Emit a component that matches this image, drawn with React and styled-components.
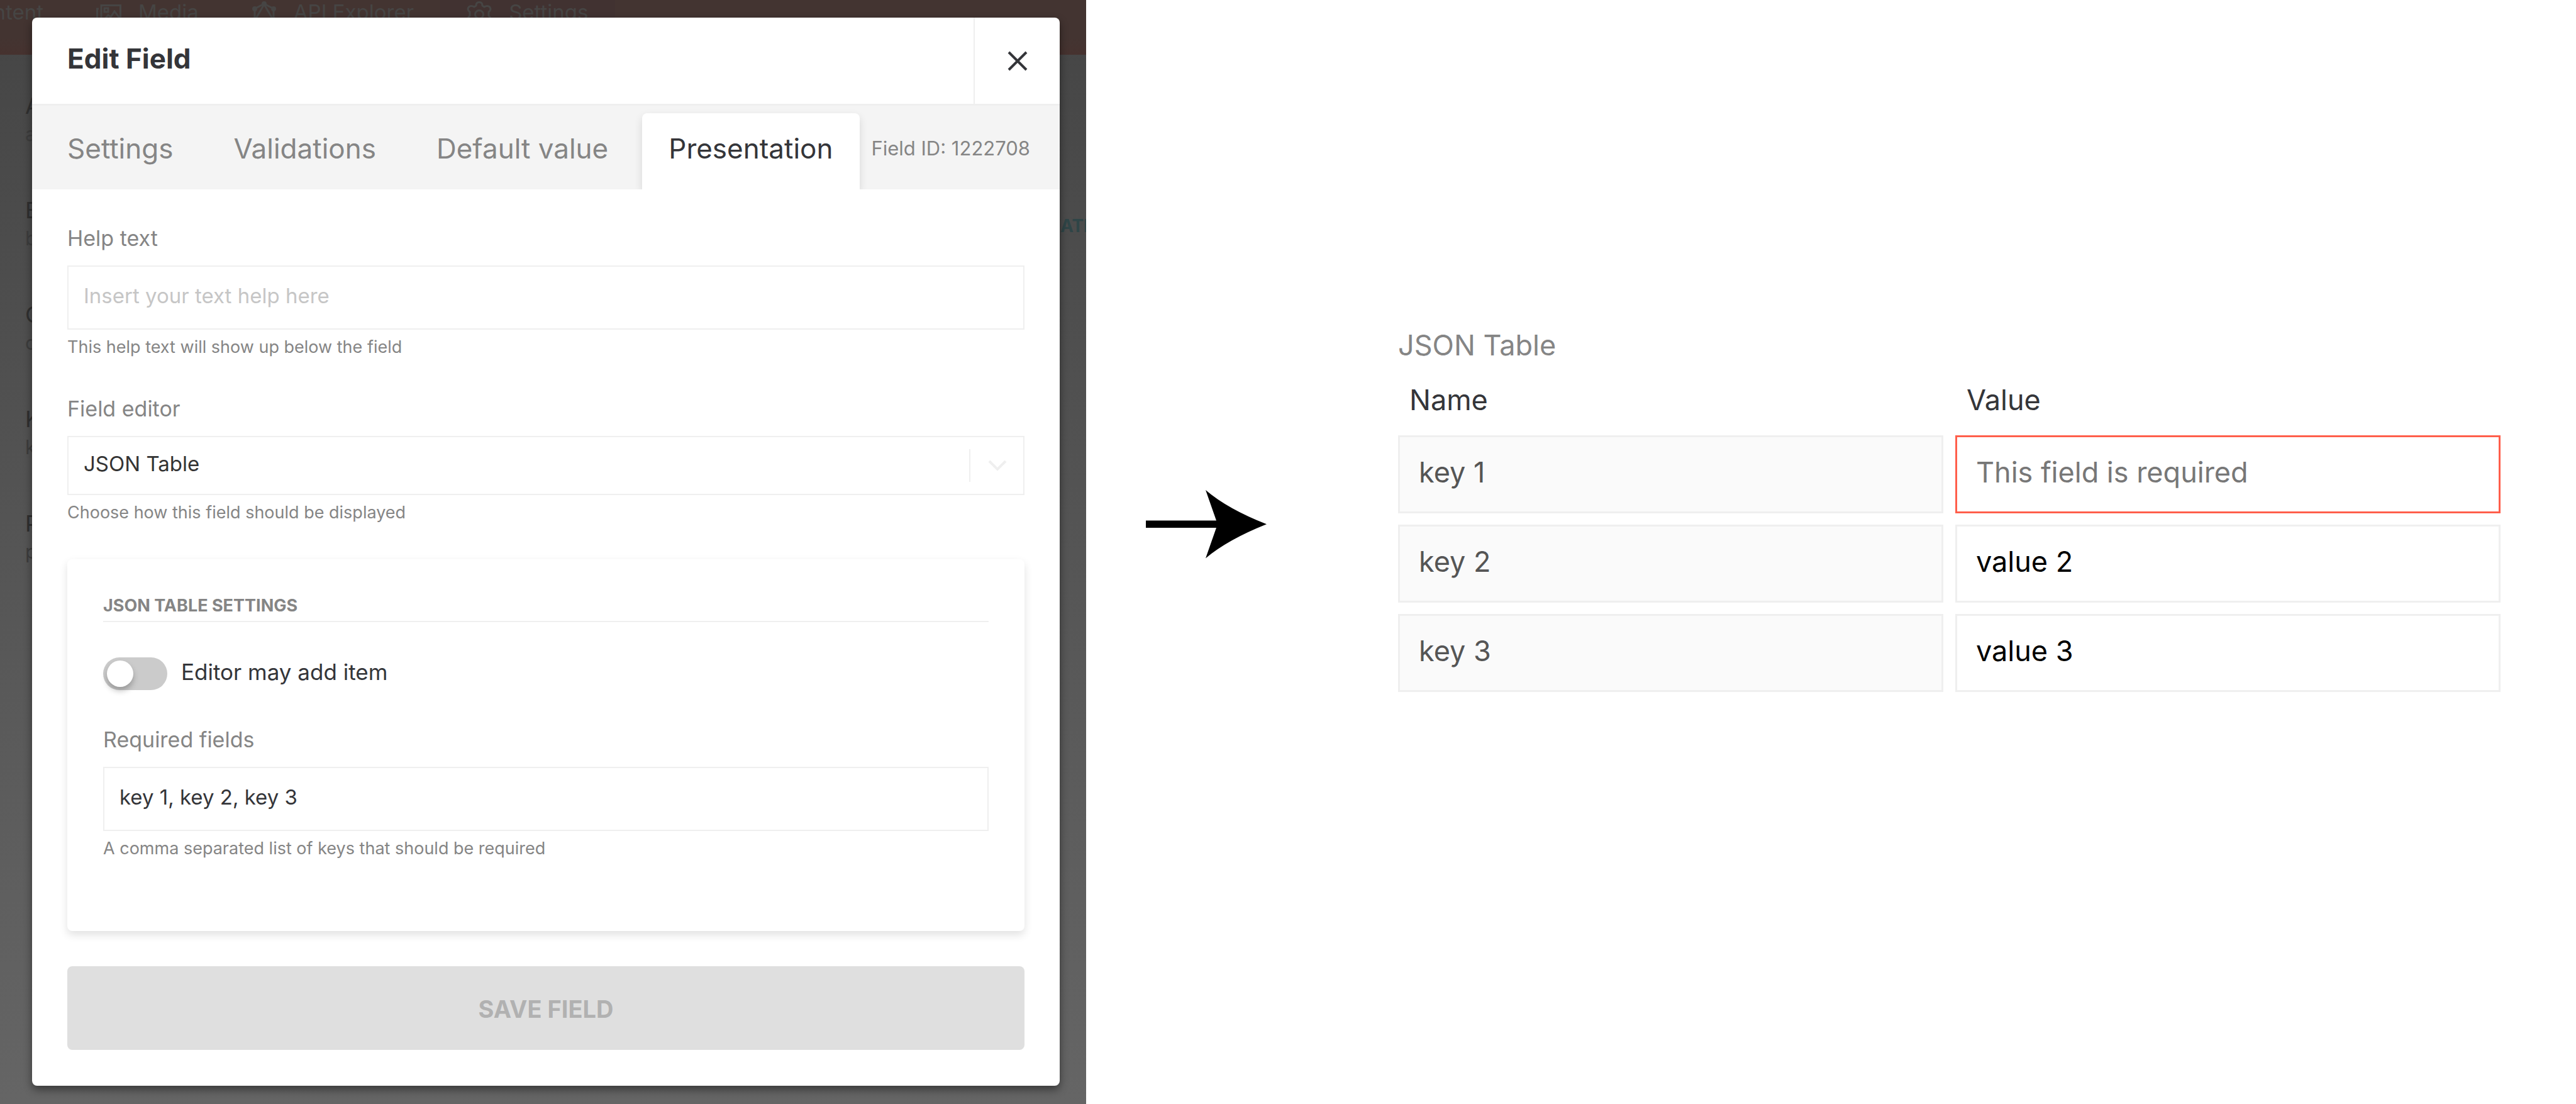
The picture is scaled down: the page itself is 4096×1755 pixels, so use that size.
import React, { useState } from "react";
import styled, { createGlobalStyle } from "styled-components";

const GlobalStyle = createGlobalStyle`
  *, *::before, *::after { box-sizing: border-box; }
  body {
    margin: 0;
    background: #fff;
    color: #343539;
    font-family: Inter, "Liberation Sans", sans-serif;
  }
  input, select, button { font-family: inherit; margin: 0; }
`;

const Page = styled.main`
  display: grid;
  grid-template-columns: 1727fr 496fr 1753fr 120fr;
  min-height: 100vh;
`;

/* ---------- Dimmed page behind the dialog ---------- */

const Stage = styled.section`
  display: grid;
  overflow: hidden;
  background: linear-gradient(#454545, #656565);
`;

const Backdrop = styled.div`
  grid-area: 1 / 1;
  min-width: 0;
  overflow: hidden;
`;

const TopNav = styled.nav`
  display: flex;
  height: 87px;
  background: linear-gradient(#433431 70%, #46322f);
`;

const NavItem = styled.div`
  display: flex;
  align-items: flex-start;
  gap: 27px;
  padding: 0 42px;
  font-size: 33px;
  line-height: 38px;
  white-space: nowrap;
  color: #464544;
  background: ${(p) => (p.$active ? "#413231" : "transparent")};
`;

const CutNavItem = styled(NavItem)`
  justify-content: flex-end;
  width: 111px;
  padding-left: 0;
`;

const NavIcon = styled.svg`
  flex: none;
  width: 40px;
  height: 44px;
  fill: none;
  stroke: #464544;
  stroke-width: 3;
`;

const RowList = styled.div`
  padding-top: 56px;
`;

const Row = styled.div`
  display: flex;
  justify-content: space-between;
  height: 166px;
  padding-left: 40px;
`;

const RowName = styled.div`
  font-size: 36px;
  line-height: 50px;
  color: #303030;
`;

const RowKey = styled.div`
  font-size: 31px;
  line-height: 40px;
  color: #3d3d3d;
`;

const RowBadge = styled.div`
  width: 41px;
  padding-top: 34px;
  font-size: 28px;
  font-weight: 700;
  line-height: 32px;
  color: #2f4547;
`;

/* ---------- Dialog ---------- */

const Overlay = styled.div`
  grid-area: 1 / 1;
  z-index: 1;
  padding: 28px 42px 29px 51px;
`;

const Dialog = styled.div`
  border-radius: 8px;
  background: #fff;
  box-shadow: 0 6px 14px rgba(0, 0, 0, 0.45);
`;

const DialogHeader = styled.header`
  display: flex;
  justify-content: space-between;
  height: 140px;
  border-bottom: 3px solid #efefef;
`;

const DialogTitle = styled.h1`
  align-self: center;
  margin: 0;
  padding: 0 0 7px 56px;
  font-size: 44px;
  font-weight: 700;
  line-height: 54px;
`;

const CloseButton = styled.button`
  display: grid;
  place-items: center;
  width: 137px;
  padding: 0;
  border: 0;
  border-left: 2px solid #efefef;
  background: none;
  color: #343539;
`;

const TabBar = styled.div`
  display: flex;
  align-items: flex-end;
  gap: 12px;
  height: 133px;
  padding: 0 47px 0 14px;
  overflow: hidden;
  background: #f4f4f4;
`;

const Tab = styled.button`
  flex: none;
  height: 121px;
  padding: 0 42px 9px;
  border: 0;
  border-radius: 8px 8px 0 0;
  font-size: 44px;
  line-height: 54px;
  white-space: nowrap;
  background: ${(p) => (p.$active ? "#fff" : "transparent")};
  color: ${(p) => (p.$active ? "#343539" : "#858585")};
  box-shadow: ${(p) => (p.$active ? "0 6px 14px rgba(0, 0, 0, 0.12)" : "none")};
`;

const FieldId = styled.div`
  height: 121px;
  margin-left: auto;
  padding-bottom: 9px;
  font-size: 31px;
  line-height: 112px;
  white-space: nowrap;
  color: #858585;
`;

const DialogBody = styled.form`
  padding: 58px 56px 57px;
`;

const FieldStack = styled.div`
  display: grid;
  gap: 62px;
`;

const Field = styled.div`
  display: flex;
  flex-direction: column;
`;

const Label = styled.label`
  margin-bottom: 23px;
  font-size: 34px;
  line-height: 40px;
  color: #858585;
`;

const Hint = styled.div`
  margin-top: 12px;
  font-size: 27px;
  line-height: 32px;
  color: #858585;
`;

const TextBox = styled.input`
  width: 100%;
  height: 102px;
  padding: 0 24px 6px;
  border: 2px solid #efefef;
  border-radius: 0;
  outline: 0;
  background: #fff;
  font-size: 33px;
  color: #343539;

  &::placeholder { color: #c6c6c6; opacity: 1; }
`;

const SelectFrame = styled.div`
  position: relative;
  height: 94px;
`;

const Select = styled.select`
  appearance: none;
  width: 100%;
  height: 100%;
  padding: 0 24px 6px;
  border: 2px solid #efefef;
  border-radius: 0;
  outline: 0;
  background: #fff;
  font-size: 33px;
  color: #333;
`;

const SelectArrow = styled.span`
  position: absolute;
  top: 21px;
  right: 0;
  bottom: 21px;
  display: grid;
  place-items: center;
  width: 88px;
  border-left: 2px solid #efefef;
  pointer-events: none;
`;

const SettingsCard = styled.section`
  margin-top: 58px;
  padding: 58px 57px 115px;
  border-radius: 8px;
  box-shadow: 0 6px 14px rgba(0, 0, 0, 0.12);
`;

const CardTitle = styled.h2`
  margin: 0;
  padding-bottom: 8px;
  border-bottom: 2px solid #efefef;
  font-size: 27px;
  font-weight: 700;
  line-height: 32px;
  color: #858585;
`;

const ToggleRow = styled.label`
  display: flex;
  gap: 22px;
  margin: 56px 0 59px;
  font-size: 35px;
  line-height: 46px;
`;

const Toggle = styled.input`
  appearance: none;
  display: flex;
  align-items: center;
  width: 102px;
  height: 52px;
  margin: 0;
  padding: 0 6px;
  border-radius: 26px;
  background: ${(p) => (p.checked ? "#7fc9a0" : "#cbcbcb")};

  &::before {
    content: "";
    width: 42px;
    height: 42px;
    margin-left: ${(p) => (p.checked ? "auto" : "0")};
    border-radius: 50%;
    background: #fff;
    box-shadow: 0 6px 10px rgba(0, 0, 0, 0.25);
  }
`;

const SaveButton = styled.button`
  width: 100%;
  height: 133px;
  margin-top: 56px;
  padding: 2px 0 0;
  border: 0;
  border-radius: 8px;
  background: #dfdfdf;
  font-size: 38px;
  font-weight: 700;
  color: #b1b1b1;
`;

/* ---------- Arrow and resulting table ---------- */

const ArrowColumn = styled.div`
  padding: 779px 0 0 95px;
`;

const TableColumn = styled.section`
  padding-top: 522px;
`;

const JsonTable = styled.table`
  display: block;
  font-size: 45px;

  caption, thead, tbody { display: block; }
  caption { line-height: 54px; text-align: left; color: #858585; }
  thead { margin: 33px 0 29px; }
  tbody { display: grid; gap: 18px; }
`;

const TableRow = styled.tr`
  display: grid;
  grid-template-columns: 1fr 1fr;
  gap: 19px;
`;

const HeadCell = styled.th`
  padding: 0 18px;
  font-weight: 400;
  line-height: 54px;
  text-align: left;
`;

const Cell = styled.td`
  padding: 0;
`;

const CellInput = styled.input`
  display: block;
  width: 100%;
  height: 124px;
  padding: 0 30px 8px;
  border: 3px solid ${(p) => (p.$invalid ? "#ff5e4b" : "#efefef")};
  border-radius: 0;
  outline: 0;
  background: ${(p) => (p.readOnly ? "#fafafa" : "#fff")};
  font-size: 45px;
  color: ${(p) => (p.readOnly ? "#555" : "#000")};

  &::placeholder { color: #777; opacity: 1; }
`;

const tabs = ["Settings", "Validations", "Default value", "Presentation"];

const backgroundRows = [
  { name: "A", key: "a" },
  { name: "B", key: "b", badge: "ATE" },
  { name: "C", key: "c" },
  { name: "K", key: "k" },
  { name: "P", key: "p" },
];

const entries = [
  { key: "key 1", value: "" },
  { key: "key 2", value: "value 2" },
  { key: "key 3", value: "value 3" },
];

function MediaIcon() {
  return (
    <NavIcon viewBox="0 0 40 44">
      <path d="M8 8.500H38.500V38H8ZM4 14H1.500V42H32" />
      <rect x="13" y="13" width="6" height="6" />
      <path d="M12 32L19 24L23 27L29 18L36 27V33" />
    </NavIcon>
  );
}

function ApiIcon() {
  return (
    <NavIcon viewBox="0 0 40 44">
      <path d="M20 6L35 14V31L20 39L5 31V14ZM20 7L6 31H34Z" />
      <g fill="#464544" stroke="none">
        <circle cx="20" cy="6" r="4" />
        <circle cx="35" cy="14" r="4" />
        <circle cx="35" cy="31" r="4" />
        <circle cx="20" cy="39" r="4" />
        <circle cx="5" cy="31" r="4" />
        <circle cx="5" cy="14" r="4" />
      </g>
    </NavIcon>
  );
}

function GearIcon() {
  return (
    <NavIcon viewBox="0 0 40 44">
      <path d="M15 9Q15 3.500 20 3.500Q25 3.500 25 9L28 11Q33 8 36.500 11Q40 15 35 19V25Q40 29 36.500 33Q33 36 28 33L25 35Q25 41 20 41Q15 41 15 35L12 33Q7 36 3.500 33Q0 29 5 25V19Q0 15 3.500 11Q7 8 12 11Z" />
      <circle cx="20" cy="23" r="6.500" />
    </NavIcon>
  );
}

function PageBehind() {
  return (
    <Backdrop aria-hidden="true">
      <TopNav>
        <CutNavItem>ntent</CutNavItem>
        <NavItem><MediaIcon />Media</NavItem>
        <NavItem><ApiIcon />API Explorer</NavItem>
        <NavItem $active><GearIcon />Settings</NavItem>
      </TopNav>
      <RowList>
        {backgroundRows.map((row) => (
          <Row key={row.name}>
            <div>
              <RowName>{row.name}</RowName>
              <RowKey>{row.key}</RowKey>
            </div>
            {row.badge && <RowBadge>{row.badge}</RowBadge>}
          </Row>
        ))}
      </RowList>
    </Backdrop>
  );
}

function EditFieldDialog() {
  const [activeTab, setActiveTab] = useState("Presentation");
  const [helpText, setHelpText] = useState("");
  const [mayAdd, setMayAdd] = useState(false);
  const [required, setRequired] = useState("key 1, key 2, key 3");

  return (
    <Dialog role="dialog" aria-labelledby="dialog-title">
      <DialogHeader>
        <DialogTitle id="dialog-title">Edit Field</DialogTitle>
        <CloseButton type="button" aria-label="Close">
          <svg width="32" height="32" viewBox="0 0 32 32" fill="none" stroke="currentColor" strokeWidth="4">
            <path d="M2 2L30 30M30 2L2 30" />
          </svg>
        </CloseButton>
      </DialogHeader>
      <TabBar role="tablist">
        {tabs.map((tab) => (
          <Tab
            key={tab}
            type="button"
            role="tab"
            aria-selected={tab === activeTab}
            $active={tab === activeTab}
            onClick={() => setActiveTab(tab)}
          >
            {tab}
          </Tab>
        ))}
        <FieldId>Field ID: 1222708</FieldId>
      </TabBar>
      <DialogBody onSubmit={(e) => e.preventDefault()}>
        <FieldStack>
          <Field>
            <Label htmlFor="help-text">Help text</Label>
            <TextBox
              id="help-text"
              placeholder="Insert your text help here"
              value={helpText}
              onChange={(e) => setHelpText(e.target.value)}
            />
            <Hint>This help text will show up below the field</Hint>
          </Field>
          <Field>
            <Label htmlFor="field-editor">Field editor</Label>
            <SelectFrame>
              <Select id="field-editor" defaultValue="json-table">
                <option value="json-table">JSON Table</option>
              </Select>
              <SelectArrow>
                <svg width="30" height="18" viewBox="0 0 30 18" fill="none" stroke="#efefef" strokeWidth="4">
                  <path d="M2 2L15 15L28 2" />
                </svg>
              </SelectArrow>
            </SelectFrame>
            <Hint>Choose how this field should be displayed</Hint>
          </Field>
        </FieldStack>
        <SettingsCard>
          <CardTitle>JSON TABLE SETTINGS</CardTitle>
          <ToggleRow>
            <Toggle type="checkbox" checked={mayAdd} onChange={(e) => setMayAdd(e.target.checked)} />
            Editor may add item
          </ToggleRow>
          <Field>
            <Label htmlFor="required-fields">Required fields</Label>
            <TextBox
              id="required-fields"
              value={required}
              onChange={(e) => setRequired(e.target.value)}
            />
            <Hint>A comma separated list of keys that should be required</Hint>
          </Field>
        </SettingsCard>
        <SaveButton type="submit" disabled>SAVE FIELD</SaveButton>
      </DialogBody>
    </Dialog>
  );
}

function ResultTable() {
  return (
    <JsonTable>
      <caption>JSON Table</caption>
      <thead>
        <TableRow>
          <HeadCell scope="col">Name</HeadCell>
          <HeadCell scope="col">Value</HeadCell>
        </TableRow>
      </thead>
      <tbody>
        {entries.map((entry) => (
          <TableRow key={entry.key}>
            <Cell>
              <CellInput readOnly aria-label="Name" value={entry.key} />
            </Cell>
            <Cell>
              <CellInput
                aria-label={`Value of ${entry.key}`}
                placeholder="This field is required"
                defaultValue={entry.value}
                $invalid={!entry.value}
              />
            </Cell>
          </TableRow>
        ))}
      </tbody>
    </JsonTable>
  );
}

export default function App() {
  return (
    <>
      <GlobalStyle />
      <Page>
        <Stage>
          <PageBehind />
          <Overlay>
            <EditFieldDialog />
          </Overlay>
        </Stage>
        <ArrowColumn>
          <svg width="192" height="109" viewBox="0 0 192 109" role="img" aria-label="leads to">
            <path d="M0 48.500H112L95 0Q130 30 192 54.300Q130 79 95 108.500L112 60H0Z" />
          </svg>
        </ArrowColumn>
        <TableColumn>
          <ResultTable />
        </TableColumn>
      </Page>
    </>
  );
}
